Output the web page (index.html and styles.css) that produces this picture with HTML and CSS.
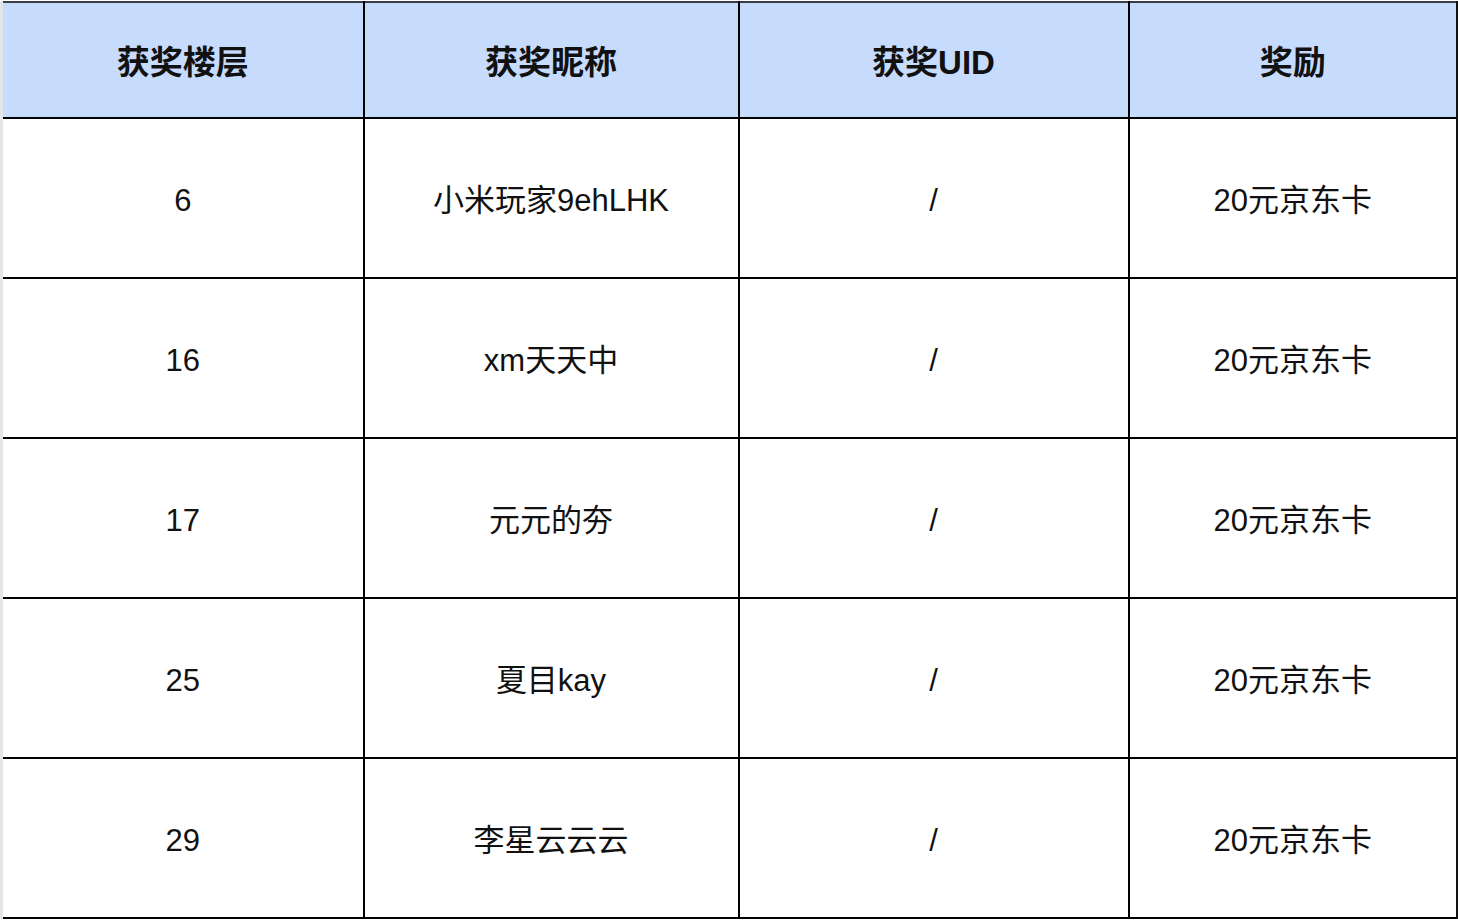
FILE: index.html
```html
<!DOCTYPE html>
<html lang="zh">
<head>
<meta charset="utf-8">
<link rel="stylesheet" href="styles.css">
</head>
<body>
<table class="prize">
  <colgroup>
    <col class="c1"><col class="c2"><col class="c3"><col class="c4">
  </colgroup>
  <thead>
    <tr><th>获奖楼层</th><th>获奖昵称</th><th>获奖UID</th><th>奖励</th></tr>
  </thead>
  <tbody>
    <tr><td>6</td><td>小米玩家9ehLHK</td><td>/</td><td>20元京东卡</td></tr>
    <tr><td>16</td><td>xm天天中</td><td>/</td><td>20元京东卡</td></tr>
    <tr><td>17</td><td>元元的夯</td><td>/</td><td>20元京东卡</td></tr>
    <tr><td>25</td><td>夏目kay</td><td>/</td><td>20元京东卡</td></tr>
    <tr><td>29</td><td>李星云云云</td><td>/</td><td>20元京东卡</td></tr>
  </tbody>
</table>
</body>
</html>
```
FILE: styles.css
```css
html, body {
  margin: 0;
  padding: 0;
  background: #ffffff;
}
body {
  width: 1458px;
  height: 920px;
  overflow: hidden;
  font-family: "Liberation Sans", Arial, "Noto Sans CJK SC", sans-serif;
  color: #111111;
}
.prize {
  width: 1456px;
  table-layout: fixed;
  border-collapse: collapse;
  margin-top: 1px;
}
.c1 { width: 362px; }
.c2 { width: 375px; }
.c3 { width: 390px; }
.c4 { width: 329px; }
.prize th,
.prize td {
  border: 2px solid #000;
  text-align: center;
  vertical-align: middle;
  padding: 6px 0 0 0;
  line-height: 40px;
}
.prize th {
  height: 108px;
  background: #c7dbfd;
  font-weight: 700;
  font-size: 33px;
  border-top: 2px solid #3a3d44;
  border-bottom: 2px solid #000;
}
.prize td {
  height: 152px;
  font-weight: 400;
  font-size: 31px;
}
.prize th:first-child,
.prize td:first-child {
  border-left: 3px solid #e3e5e9;
}
.prize th:last-child,
.prize td:last-child {
  border-right: 3px solid #111;
}
```
